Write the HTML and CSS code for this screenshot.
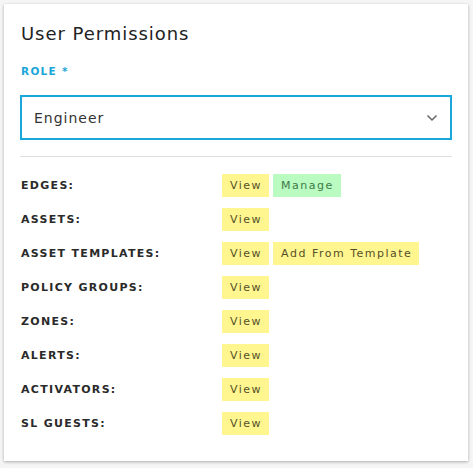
FILE: index.html
```html
<!DOCTYPE html>
<html>
<head>
<meta charset="utf-8">
<link rel="stylesheet" href="styles.css">
</head>
<body>
<div class="card">
  <h2 class="title">User Permissions</h2>
  <div class="field-label">ROLE *</div>
  <div class="select">
    <span class="select-value">Engineer</span>
    <svg class="chevron" width="12" height="8" viewBox="0 0 12 8"><path d="M1.5 1.5 L6 6 L10.5 1.5" fill="none" stroke="#666" stroke-width="1.5"/></svg>
  </div>
  <div class="divider"></div>
  <div class="perms">
    <div class="perm-label">EDGES:</div>
    <div class="chips"><span class="chip">View</span><span class="chip green">Manage</span></div>
    <div class="perm-label">ASSETS:</div>
    <div class="chips"><span class="chip">View</span></div>
    <div class="perm-label">ASSET TEMPLATES:</div>
    <div class="chips"><span class="chip">View</span><span class="chip">Add From Template</span></div>
    <div class="perm-label">POLICY GROUPS:</div>
    <div class="chips"><span class="chip">View</span></div>
    <div class="perm-label">ZONES:</div>
    <div class="chips"><span class="chip">View</span></div>
    <div class="perm-label">ALERTS:</div>
    <div class="chips"><span class="chip">View</span></div>
    <div class="perm-label">ACTIVATORS:</div>
    <div class="chips"><span class="chip">View</span></div>
    <div class="perm-label">SL GUESTS:</div>
    <div class="chips"><span class="chip">View</span></div>
  </div>
</div>
</body>
</html>
```

FILE: styles.css
```css
html, body {
  margin: 0;
  padding: 0;
}
body {
  background: #f5f5f5;
  padding: 4px;
  font-family: "DejaVu Sans", "Liberation Sans", sans-serif;
}
.card {
  width: 464px;
  height: 457px;
  box-sizing: border-box;
  background: #fff;
  box-shadow: 0 1px 3px rgba(0, 0, 0, 0.3);
  padding: 18px 16px 0 17px;
}
.title {
  margin: 0;
  font-size: 18px;
  line-height: 24px;
  font-weight: normal;
  color: #222;
  letter-spacing: 0.95px;
}
.field-label {
  margin-top: 17px;
  font-size: 10.5px;
  line-height: 16px;
  font-weight: bold;
  color: #1ba6d9;
  letter-spacing: 1.3px;
}
.select {
  margin-top: 16px;
  margin-left: -1px;
  width: 432px;
  height: 45px;
  box-sizing: border-box;
  border: 2px solid #1ba6d9;
  display: flex;
  align-items: center;
  justify-content: space-between;
  padding: 0 12px 0 12px;
}
.select-value {
  font-size: 14px;
  color: #333;
  letter-spacing: 1px;
}
.chevron {
  display: block;
}
.divider {
  margin-top: 16px;
  margin-left: -1px;
  width: 432px;
  height: 1px;
  background: #dddddd;
}
.perms {
  margin-top: 17px;
  display: grid;
  grid-template-columns: 201px 1fr;
  row-gap: 11px;
  align-items: center;
}
.perm-label {
  font-size: 11px;
  font-weight: bold;
  color: #2a2a2a;
  letter-spacing: 1.3px;
}
.chips {
  display: flex;
  gap: 4px;
}
.chip {
  height: 23px;
  box-sizing: border-box;
  padding: 0 7px 0 8px;
  display: flex;
  align-items: center;
  background: #fff68f;
  color: #55502a;
  font-size: 11px;
  letter-spacing: 1.5px;
}
.chip.green {
  background: #b9fbc0;
  color: #3f7a4a;
}
```
